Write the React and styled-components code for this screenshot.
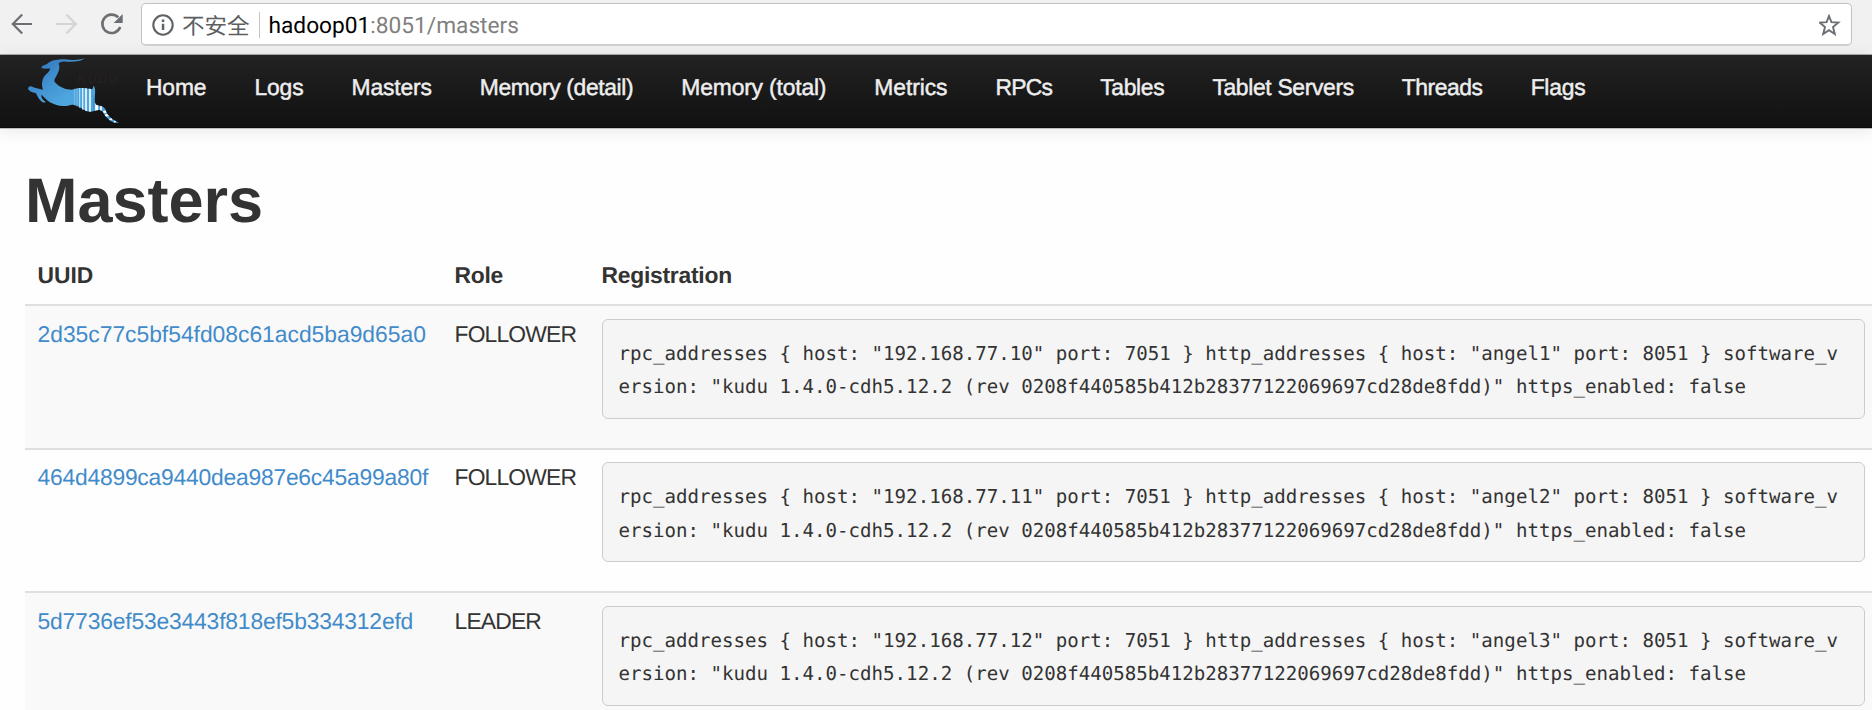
import React from "react";
import styled, { createGlobalStyle } from "styled-components";

const GlobalStyle = createGlobalStyle`
  * { box-sizing: border-box; }
  html, body { margin: 0; padding: 0; height: 710px; overflow: hidden; background: #fefefe; }
  body {
    font-family: "Liberation Sans", Arial, sans-serif;
    font-size: 22.86px;
    color: #333;
    text-rendering: geometricPrecision;
  }
`;

const Page = styled.div`
  width: 1872px;
  height: 710px;
  overflow: hidden;
`;

const Toolbar = styled.header`
  display: flex;
  align-items: flex-start;
  height: 55px;
  padding: 3px 20px 0 10px;
  background: #f1f1f1;
  border-bottom: 1px solid #a9a9a9;
`;

const ToolIcons = styled.div`
  display: flex;
  flex: none;
  width: 131px;
  padding-top: 9px;
`;

const ToolIcon = styled.svg`
  flex: none;
  width: 24px;
  height: 24px;
  margin-right: 21px;
  fill: none;
  stroke: ${(p) => p.$color};
  stroke-width: 2.2;
`;

const AddressBar = styled.div`
  display: flex;
  align-items: center;
  flex: 1;
  height: 43px;
  padding: 1px 10px 0 10px;
  background: #fff;
  border: 1px solid #c2c2c2;
  border-bottom: 2px solid #cfcfcf;
  border-radius: 5px;
`;

const InfoIcon = styled.svg`
  width: 22px;
  height: 22px;
  flex: none;
`;

const Insecure = styled.span`
  margin-left: 8px;
  font: 22.5px "Noto Sans CJK SC", sans-serif;
  line-height: 36px;
  color: #5b5e62;
`;

const Divider = styled.span`
  width: 1px;
  height: 26px;
  margin: 0 9px;
  background: #c4c4c4;
`;

const Url = styled.span`
  flex: 1;
  padding-top: 2px;
  font-family: Roboto, sans-serif;
  font-size: 22.7px;
  line-height: 38px;
  color: #808080;
  b { font-weight: 400; color: #000; }
`;

const Navbar = styled.nav`
  display: flex;
  height: 73px;
  padding-left: 25px;
  background: linear-gradient(#222, #111);
  border-bottom: 1px solid #0a0a0a;
  box-shadow: 0 1px 0 #bdbdbd, 0 2px 16px rgba(0, 0, 0, 0.1);
`;

const Logo = styled.svg`
  flex: none;
  width: 97px;
  height: 72px;
`;

const NavItem = styled.a`
  padding: 0 24px;
  font-size: 22.86px;
  line-height: 65px;
  letter-spacing: ${(p) => p.$tracking}px;
  white-space: nowrap;
  color: #eee;
  -webkit-text-stroke: 0.45px #eee;
`;

const Main = styled.main`
  padding: 39px 0 0 25px;
`;

const Title = styled.h1`
  margin: 0;
  font-size: 63px;
  line-height: 69px;
  font-weight: 700;
  color: #333;
`;

const Table = styled.table`
  width: 1853px;
  margin-top: 14px;
  table-layout: fixed;
  border-collapse: separate;
  border-spacing: 0;
`;

const HeadCell = styled.th`
  width: ${(p) => p.$width};
  height: 54px;
  padding: 0 13px 4px 12.5px;
  text-align: left;
  font-weight: 700;
  line-height: 32px;
  letter-spacing: ${(p) => p.$tracking || 0}px;
`;

const Row = styled.tr`
  height: 143.7px;
  background: ${(p) => (p.$striped ? "#f9f9f9" : "#fefefe")};
`;

const Cell = styled.td`
  padding: 12.5px 13px 0 12.5px;
  border-top: 2px solid #dfdfdf;
  vertical-align: top;
  line-height: 31px;
  white-space: nowrap;
`;

const Uuid = styled.a`
  color: #428bca;
  letter-spacing: ${(p) => p.$tracking}px;
`;

const Role = styled.span`
  letter-spacing: -0.83px;
`;

const Registration = styled.pre`
  height: 100px;
  margin: 0;
  padding: 17px 16px 0;
  background: #f5f5f5;
  border: 1.6px solid #ccc;
  border-radius: 6px;
  font-family: "DejaVu Sans Mono", monospace;
  font-size: 19.12px;
  line-height: 33.5px;
  white-space: pre-wrap;
  word-break: break-all;
`;

const links = [
  { label: "Home", tracking: -0.15 },
  { label: "Logs", tracking: -0.1 },
  { label: "Masters", tracking: -0.15 },
  { label: "Memory (detail)", tracking: -0.35 },
  { label: "Memory (total)", tracking: -0.17 },
  { label: "Metrics", tracking: -0.08 },
  { label: "RPCs", tracking: -0.75 },
  { label: "Tables", tracking: -0.3 },
  { label: "Tablet Servers", tracking: -0.34 },
  { label: "Threads", tracking: -0.43 },
  { label: "Flags", tracking: -0.24 },
];

const masters = [
  { uuid: "2d35c77c5bf54fd08c61acd5ba9d65a0", tracking: -0.02, role: "FOLLOWER", ip: "192.168.77.10", host: "angel1" },
  { uuid: "464d4899ca9440dea987e6c45a99a80f", tracking: -0.23, role: "FOLLOWER", ip: "192.168.77.11", host: "angel2" },
  { uuid: "5d7736ef53e3443f818ef5b334312efd", tracking: -0.18, role: "LEADER", ip: "192.168.77.12", host: "angel3" },
];

const registration = (m) =>
  `rpc_addresses { host: "${m.ip}" port: 7051 } http_addresses { host: "${m.host}" port: 8051 } software_version: "kudu 1.4.0-cdh5.12.2 (rev 0208f440585b412b28377122069697cd28de8fdd)" https_enabled: false`;

function KuduLogo() {
  return (
    <Logo viewBox="75 165 291 216">
      <defs>
        <linearGradient id="hide" gradientUnits="userSpaceOnUse" x1="100" y1="180" x2="190" y2="300">
          <stop offset="0" stopColor="#2f6fb8" />
          <stop offset="0.45" stopColor="#3f8dcc" />
          <stop offset="1" stopColor="#4ea6df" />
        </linearGradient>
        <clipPath id="rump">
          <path d="M218 268 C238 261 258 264 276 268 C280 264 279 260 281 257 C286 263 286 274 285 284 C283 300 284 308 288 314 C302 318 314 319 317 331 C321 348 340 362 357 368 C344 371 329 362 318 350 C309 340 310 331 298 330 C289 329 284 334 271 335 C253 335 240 321 218 314 Z" />
        </clipPath>
      </defs>
      <text x="232" y="248" fontFamily="Liberation Sans, sans-serif" fontStyle="italic" fontSize="38" textLength="120" fill="#292021">KUDU</text>
      <path
        fill="url(#hide)"
        d="M254 175 C240 187 217 185 200 185 C188 184 181 186 176 190 C180 203 178 212 171 224 C166 233 161 240 164 246 C178 262 197 269 216 269 C237 261 258 264 276 268 C280 264 279 260 281 257 C286 263 286 274 285 284 C283 300 284 308 288 314 C302 318 314 319 317 331 C321 348 340 362 357 368 C344 371 329 362 318 350 C309 340 310 331 298 330 C289 329 284 334 271 335 C253 335 244 319 220 314 C207 314 205 319 187 318 C168 317 148 309 131 291 L125 284 C122 293 129 299 138 306 C130 311 118 301 112 287 L107 279 C98 277 88 275 84 266 C84 261 89 258 94 259 C105 264 116 267 129 269 C124 254 126 240 132 230 C138 221 148 216 151 206 C144 205 138 207 125 205 C123 200 127 196 134 195 C143 193 150 181 168 180 C186 175 199 179 215 180 C231 181 242 178 254 175 Z"
      />
      <g clipPath="url(#rump)">
        <path d="M224 262 V320 M231 260 V326" stroke="#8cc6ea" strokeWidth="2" />
        <path d="M239 260 V330" stroke="#b9dff4" strokeWidth="3" />
        <path d="M248 258 V336" stroke="#d9eefa" strokeWidth="4" />
        <path d="M258 258 V338 M270 258 V338" stroke="#f4fbff" strokeWidth="5" />
        <path d="M281 284 V336" stroke="#4299d6" strokeWidth="6" />
        <path d="M290 308 V336" stroke="#fff" strokeWidth="9" />
        <path d="M304 314 L302 336" stroke="#fff" strokeWidth="5" />
        <path d="M310 337 L330 331 M315 347 L336 342" stroke="#fff" strokeWidth="7" />
        <path d="M327 362 L342 351 M341 371 L349 358" stroke="#fff" strokeWidth="5" />
      </g>
    </Logo>
  );
}

export default function App() {
  return (
    <Page>
      <GlobalStyle />
      <Toolbar>
        <ToolIcons>
          <ToolIcon $color="#6b6e72" viewBox="0 0 24 24">
            <path d="M22 12H3M12.2 2.5L2.8 12L12.2 21.5" />
          </ToolIcon>
          <ToolIcon $color="#d4d4d4" viewBox="0 0 24 24">
            <path d="M1 12H20.5M11.3 2.5L20.8 12L11.3 21.5" />
          </ToolIcon>
          <ToolIcon $color="#6b6e72" viewBox="0 0 24 24">
            <path d="M18.2 5.4A9.2 9.2 0 1 0 20.2 15" strokeWidth="2.6" />
            <path d="M22.7 2V11H13.7Z" fill="#6b6e72" stroke="none" />
          </ToolIcon>
        </ToolIcons>
        <AddressBar>
          <InfoIcon viewBox="0 0 22 22">
            <circle cx="11" cy="11" r="9.7" fill="none" stroke="#5f6368" strokeWidth="2.1" />
            <path d="M9.8 9.7h2.5v6.4H9.8zM9.8 5.6h2.5v2.5H9.8z" fill="#5f6368" />
          </InfoIcon>
          <Insecure>不安全</Insecure>
          <Divider />
          <Url><b>hadoop01</b>:8051/masters</Url>
          <InfoIcon viewBox="0 0 22 22">
            <path d="M10 2L12.4 8.2L19.3 8.6L14 13L15.8 20L10 16.2L4.2 20L6 13L.7 8.6L7.6 8.2Z" fill="none" stroke="#6b6e75" strokeWidth="1.9" />
          </InfoIcon>
        </AddressBar>
      </Toolbar>
      <Navbar>
        <KuduLogo />
        {links.map((l) => <NavItem key={l.label} $tracking={l.tracking}>{l.label}</NavItem>)}
      </Navbar>
      <Main>
        <Title>Masters</Title>
        <Table>
          <thead>
            <tr>
              <HeadCell $width="417px">UUID</HeadCell>
              <HeadCell $width="147px" $tracking={-0.25}>Role</HeadCell>
              <HeadCell $tracking={-0.25}>Registration</HeadCell>
            </tr>
          </thead>
          <tbody>
            {masters.map((m, i) => (
              <Row key={m.uuid} $striped={i % 2 === 0}>
                <Cell><Uuid $tracking={m.tracking}>{m.uuid}</Uuid></Cell>
                <Cell><Role>{m.role}</Role></Cell>
                <Cell><Registration>{registration(m)}</Registration></Cell>
              </Row>
            ))}
          </tbody>
        </Table>
      </Main>
    </Page>
  );
}
